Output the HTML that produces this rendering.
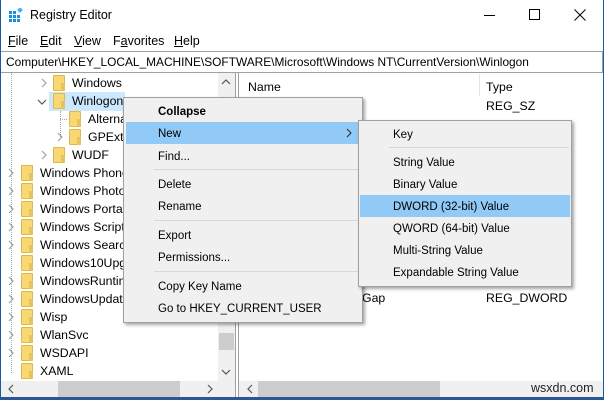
<!DOCTYPE html>
<html><head><style>
*{margin:0;padding:0;box-sizing:border-box}
body{width:604px;height:400px;overflow:hidden;background:#fff;font-family:"Liberation Sans",sans-serif;font-size:12px;color:#000;position:relative}
.a{position:absolute;white-space:nowrap}
.f{position:absolute;width:12px;height:16px;background:#f8d775;border:1px solid #e0b84a;border-radius:1px}
.f:after{content:"";position:absolute;right:-1px;bottom:-1px;width:4px;height:8px;background:#e8c25a}
.ch{position:absolute;width:8px;height:10px}
.t{position:absolute;font-size:12.3px;white-space:nowrap}
.mi{position:absolute;left:34px;font-size:11.5px;white-space:nowrap;margin-top:2px}
.sep{position:absolute;height:1px;background:#d7d7d7}
</style></head><body>
<svg width="0" height="0" style="position:absolute"><defs><symbol id="r" viewBox="0 0 8 10"><path d="M2 1L6 5L2 9" fill="none" stroke="#a0a0a0" stroke-width="1.2"/></symbol><symbol id="d" viewBox="0 0 10 8"><path d="M1 2L5 6L9 2" fill="none" stroke="#555" stroke-width="1.2"/></symbol></defs></svg>
<div class="a" style="left:0;top:0;width:1px;height:400px;background:#1e5aa0"></div>
<div class="a" style="right:0;top:0;width:1px;height:400px;background:#1e5aa0"></div>
<div class="a" style="left:0;top:397px;width:604px;height:3px;background:#2b5797"></div>
<svg class="a" style="left:9px;top:8px" width="14" height="14"><g fill="#1a8fe0"><rect x="0" y="3" width="3" height="3"/><rect x="4" y="3" width="3" height="3"/><rect x="0" y="7" width="3" height="3"/><rect x="4" y="7" width="3" height="3"/><rect x="8" y="7" width="3" height="3"/><rect x="0" y="11" width="3" height="3"/><rect x="4" y="11" width="3" height="3"/><rect x="8" y="11" width="3" height="3"/></g><rect x="9" y="0" width="4" height="4" fill="#3cb4f0" transform="rotate(45 11 2)"/></svg>
<div class="a" style="left:30px;top:8px;font-size:12.5px">Registry Editor</div>
<div class="a" style="left:484px;top:15px;width:11px;height:1px;background:#000"></div>
<div class="a" style="left:529px;top:9px;width:11px;height:11px;border:1px solid #000"></div>
<svg class="a" style="left:574px;top:9px" width="12" height="12"><path d="M0.5 0.5L11.5 11.5M11.5 0.5L0.5 11.5" stroke="#000"/></svg>
<div class="a" style="left:8px;top:34px;font-size:12.5px"><u>F</u>ile</div>
<div class="a" style="left:40px;top:34px;font-size:12.5px"><u>E</u>dit</div>
<div class="a" style="left:74px;top:34px;font-size:12.5px"><u>V</u>iew</div>
<div class="a" style="left:113px;top:34px;font-size:12.5px">F<u>a</u>vorites</div>
<div class="a" style="left:174px;top:34px;font-size:12.5px"><u>H</u>elp</div>
<div class="a" style="left:1px;top:51px;width:602px;height:22px;border-top:1px solid #a0a0a0;border-bottom:1px solid #a0a0a0;border-right:1px solid #a0a0a0"></div>
<div class="a" style="left:6px;top:55px;font-size:11.9px">Computer\HKEY_LOCAL_MACHINE\SOFTWARE\Microsoft\Windows NT\CurrentVersion\Winlogon</div>
<div class="a" style="left:218px;top:73px;width:17px;height:308px;background:#f0f0f0"></div>
<svg class="a" style="left:221px;top:78px" width="10" height="8"><path d="M1 6L5 2L9 6" fill="none" stroke="#555" stroke-width="1.2"/></svg>
<div class="a" style="left:219px;top:333px;width:15px;height:17px;background:#cdcdcd"></div>
<svg class="a" style="left:221px;top:368px" width="10" height="8"><use href="#d"/></svg>
<div class="a" style="left:1px;top:381px;width:234px;height:16px;background:#f0f0f0"></div>
<div class="a" style="left:58px;top:381px;width:122px;height:16px;background:#cdcdcd"></div>
<svg class="a" style="left:7px;top:384px" width="8" height="10"><path d="M6 1L2 5L6 9" fill="none" stroke="#555" stroke-width="1.2"/></svg>
<svg class="a" style="left:206px;top:384px" width="8" height="10"><path d="M2 1L6 5L2 9" fill="none" stroke="#555" stroke-width="1.2"/></svg>
<div class="a" style="left:235px;top:73px;width:1px;height:324px;background:#a0a0a0"></div>
<div class="a" style="left:238px;top:73px;width:1px;height:324px;background:#a0a0a0"></div>
<div class="a" style="left:11px;top:73px;height:300px;border-left:1px dotted #aaa"></div>
<svg class="ch" style="left:40px;top:78px"><use href="#r"/></svg><div class="f" style="left:53px;top:75px"></div><div class="t" style="left:72px;top:76px">Windows</div>
<div class="a" style="left:49px;top:92px;width:76px;height:19px;background:#cce8ff"></div>
<svg class="a" style="left:37px;top:98px" width="10" height="8"><use href="#d"/></svg><div class="f" style="left:53px;top:93px"></div><div class="t" style="left:72px;top:94px">Winlogon</div>
<div class="a" style="left:60px;top:111px;height:26px;border-left:1px dotted #aaa"></div><div class="a" style="left:60px;top:119px;width:7px;border-top:1px dotted #aaa"></div>
<div class="f" style="left:69px;top:111px"></div><div class="t" style="left:88px;top:112px">Alterna</div>
<svg class="ch" style="left:56px;top:132px"><use href="#r"/></svg><div class="f" style="left:69px;top:129px"></div><div class="t" style="left:88px;top:130px">GPExte</div>
<svg class="ch" style="left:40px;top:150px"><use href="#r"/></svg><div class="f" style="left:53px;top:147px"></div><div class="t" style="left:72px;top:148px">WUDF</div>
<svg class="ch" style="left:7px;top:168px"><use href="#r"/></svg><div class="f" style="left:21px;top:165px"></div><div class="t" style="left:40px;top:166px">Windows Phone</div>
<svg class="ch" style="left:7px;top:186px"><use href="#r"/></svg><div class="f" style="left:21px;top:183px"></div><div class="t" style="left:40px;top:184px">Windows Photo</div>
<svg class="ch" style="left:7px;top:204px"><use href="#r"/></svg><div class="f" style="left:21px;top:201px"></div><div class="t" style="left:40px;top:202px">Windows Portab</div>
<svg class="ch" style="left:7px;top:222px"><use href="#r"/></svg><div class="f" style="left:21px;top:219px"></div><div class="t" style="left:40px;top:220px">Windows Script</div>
<svg class="ch" style="left:7px;top:240px"><use href="#r"/></svg><div class="f" style="left:21px;top:237px"></div><div class="t" style="left:40px;top:238px">Windows Search</div>
<div class="f" style="left:21px;top:255px"></div><div class="t" style="left:40px;top:256px">Windows10Upg</div>
<svg class="ch" style="left:7px;top:276px"><use href="#r"/></svg><div class="f" style="left:21px;top:273px"></div><div class="t" style="left:40px;top:274px">WindowsRuntim</div>
<svg class="ch" style="left:7px;top:294px"><use href="#r"/></svg><div class="f" style="left:21px;top:291px"></div><div class="t" style="left:40px;top:292px">WindowsUpdate</div>
<svg class="ch" style="left:7px;top:312px"><use href="#r"/></svg><div class="f" style="left:21px;top:309px"></div><div class="t" style="left:40px;top:310px">Wisp</div>
<svg class="ch" style="left:7px;top:330px"><use href="#r"/></svg><div class="f" style="left:21px;top:327px"></div><div class="t" style="left:40px;top:328px">WlanSvc</div>
<svg class="ch" style="left:7px;top:348px"><use href="#r"/></svg><div class="f" style="left:21px;top:345px"></div><div class="t" style="left:40px;top:346px">WSDAPI</div>
<div class="f" style="left:21px;top:363px"></div><div class="t" style="left:40px;top:364px">XAML</div>
<div class="a" style="left:479px;top:74px;width:1px;height:22px;background:#e5e5e5"></div>
<div class="t" style="left:248px;top:80px">Name</div>
<div class="t" style="left:486px;top:80px">Type</div>
<div class="t" style="left:486px;top:99px">REG_SZ</div>
<div class="t" style="left:362px;top:291px">Gap</div>
<div class="t" style="left:486px;top:291px">REG_DWORD</div>
<div class="a" style="left:239px;top:381px;width:364px;height:16px;background:#f0f0f0"></div>
<div class="a" style="left:258px;top:381px;width:182px;height:16px;background:#cdcdcd"></div>
<svg class="a" style="left:246px;top:384px" width="8" height="10"><path d="M6 1L2 5L6 9" fill="none" stroke="#555" stroke-width="1.2"/></svg>
<div class="a" style="left:531px;top:381px;font-size:12.5px;color:#222">wsxdn.com</div>
<div class="a" style="left:123px;top:97px;width:240px;height:226px;background:#f0f0f0;border:1px solid #a0a0a0;box-shadow:2px 2px 3px rgba(0,0,0,.35)">
<div class="mi" style="top:6px;font-weight:bold">Collapse</div>
<div class="a" style="left:2px;top:24px;width:234px;height:22px;background:#91c9f7"></div>
<div class="mi" style="top:28px">New</div>
<svg class="a" style="left:221px;top:30px" width="8" height="10"><path d="M2 1L6 5L2 9" fill="none" stroke="#333" stroke-width="1.1"/></svg>
<div class="mi" style="top:51px">Find...</div>
<div class="sep" style="left:30px;top:71px;width:206px"></div>
<div class="mi" style="top:79px">Delete</div>
<div class="mi" style="top:101px">Rename</div>
<div class="sep" style="left:30px;top:122px;width:206px"></div>
<div class="mi" style="top:130px">Export</div>
<div class="mi" style="top:152px">Permissions...</div>
<div class="sep" style="left:30px;top:173px;width:206px"></div>
<div class="mi" style="top:181px">Copy Key Name</div>
<div class="mi" style="top:203px">Go to HKEY_CURRENT_USER</div>
</div>
<div class="a" style="left:358px;top:120px;width:214px;height:167px;background:#f0f0f0;border:1px solid #a0a0a0;box-shadow:2px 2px 3px rgba(0,0,0,.35)">
<div class="mi" style="top:6px">Key</div>
<div class="sep" style="left:30px;top:26px;width:180px"></div>
<div class="mi" style="top:34px">String Value</div>
<div class="mi" style="top:56px">Binary Value</div>
<div class="a" style="left:1px;top:74px;width:210px;height:22px;background:#91c9f7"></div>
<div class="mi" style="top:78px">DWORD (32-bit) Value</div>
<div class="mi" style="top:100px">QWORD (64-bit) Value</div>
<div class="mi" style="top:122px">Multi-String Value</div>
<div class="mi" style="top:144px">Expandable String Value</div>
</div>
</body></html>
